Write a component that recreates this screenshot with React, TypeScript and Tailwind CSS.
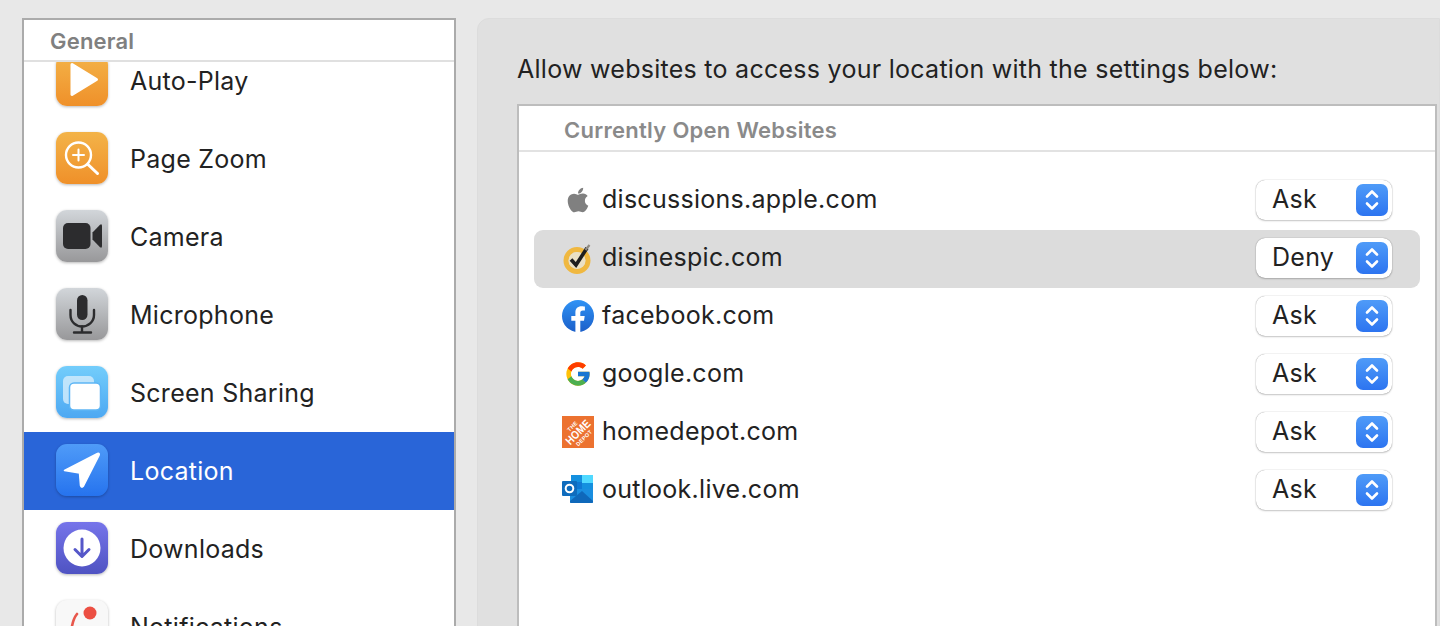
import React from "react";
import { FaApple } from "react-icons/fa";
import { FcGoogle } from "react-icons/fc";

const font = "font-['Inter','Liberation_Sans',sans-serif]";

const AppIcon = ({ className, children }: { className: string; children: React.ReactNode }) => (
  <div
    className={`mb-[2px] flex h-[52px] w-[52px] shrink-0 items-center justify-center rounded-[11px] shadow-[0_1px_3px_rgba(0,0,0,0.28)] ${className}`}
  >
    {children}
  </div>
);

const orange = "bg-linear-to-b from-[#f3b348] to-[#ef9029]";
const grey = "bg-linear-to-b from-[#d2d6da] to-[#98989a]";

const sideItems: { label: string; active?: boolean; icon: React.ReactNode }[] = [
  {
    label: "Auto-Play",
    icon: (
      <AppIcon className={orange}>
        <svg width="52" height="52" viewBox="0 0 52 52">
          <path d="M16 10.5 L40.5 25.5 L16 40.5 Z" fill="#fff" stroke="#fff" strokeWidth="3" strokeLinejoin="round" />
        </svg>
      </AppIcon>
    ),
  },
  {
    label: "Page Zoom",
    icon: (
      <AppIcon className={orange}>
        <svg width="52" height="52" viewBox="0 0 52 52" fill="none" stroke="#fff" strokeLinecap="round">
          <circle cx="22.5" cy="23" r="12.5" strokeWidth="2.4" />
          <path d="M32 32.5 L41.5 41.5" strokeWidth="3" />
          <path d="M17 23 H28 M22.5 17.5 V28.5" strokeWidth="2" />
        </svg>
      </AppIcon>
    ),
  },
  {
    label: "Camera",
    icon: (
      <AppIcon className={grey}>
        <svg width="52" height="52" viewBox="0 0 52 52" fill="#2c2c2e">
          <rect x="7" y="13" width="27.5" height="26" rx="5" />
          <path d="M36.5 22.5 L44 14.8 Q46 13.4 46 16 V36 Q46 38.6 44 37.2 L36.5 29.5 Z" />
        </svg>
      </AppIcon>
    ),
  },
  {
    label: "Microphone",
    icon: (
      <AppIcon className={grey}>
        <svg width="52" height="52" viewBox="0 0 52 52" fill="none" stroke="#2c2c2e">
          <rect x="21" y="7" width="10.5" height="25" rx="5.25" fill="#2c2c2e" stroke="none" />
          <path d="M14.5 22 V27 C14.5 34 20 38.5 26 38.5 C32 38.5 38 34 38 27 V22" strokeWidth="2.4" strokeLinecap="round" />
          <path d="M26 38.5 V44.5 M18 44.5 H35" strokeWidth="2.4" strokeLinecap="round" />
        </svg>
      </AppIcon>
    ),
  },
  {
    label: "Screen Sharing",
    icon: (
      <AppIcon className="bg-linear-to-b from-[#73cdfb] to-[#4da8f2]">
        <svg width="52" height="52" viewBox="0 0 52 52">
          <rect x="7" y="10" width="31" height="28" rx="5" fill="#cfeafc" opacity="0.85" />
          <rect x="13.5" y="17" width="31" height="27" rx="4.5" fill="#fff" stroke="#5db5f5" strokeWidth="1.5" />
        </svg>
      </AppIcon>
    ),
  },
  {
    label: "Location",
    active: true,
    icon: (
      <AppIcon className="bg-linear-to-b from-[#4f9bf8] to-[#2673ee]">
        <svg width="52" height="52" viewBox="0 0 52 52">
          <path d="M8.5 26.5 L41.5 9.5 Q44 8.8 43 11.5 L27.5 42 Q25.5 44.5 24.5 41.5 L23.5 29 Z" fill="#fff" stroke="#fff" strokeWidth="1.5" strokeLinejoin="round" />
        </svg>
      </AppIcon>
    ),
  },
  {
    label: "Downloads",
    icon: (
      <AppIcon className="bg-linear-to-b from-[#7674ea] to-[#4f53c2]">
        <svg width="52" height="52" viewBox="0 0 52 52" fill="none">
          <circle cx="26" cy="26" r="18.5" fill="#fff" />
          <path d="M26 17 V34 M19 27.5 L26 34.5 L33 27.5" stroke="#5557c9" strokeWidth="3" strokeLinecap="round" strokeLinejoin="round" />
        </svg>
      </AppIcon>
    ),
  },
  {
    label: "Notifications",
    icon: (
      <AppIcon className="bg-[#f8f8f8]">
        <svg width="52" height="52" viewBox="0 0 52 52" fill="none">
          <path d="M21 14 C16 20 16 26 15 33" stroke="#e8574c" strokeWidth="2.6" strokeLinecap="round" />
          <path d="M26 28 V36" stroke="#e8574c" strokeWidth="2.6" strokeLinecap="round" />
          <circle cx="34" cy="13" r="6.5" fill="#ec4f43" />
        </svg>
      </AppIcon>
    ),
  },
];

const Norton = () => (
  <svg width="32" height="32" viewBox="0 0 32 32" fill="none">
    <circle cx="15" cy="18.5" r="11" stroke="#f0b840" strokeWidth="5" />
    <circle cx="15" cy="18.5" r="8.5" fill="#f3e2b5" opacity="0.6" />
    <path d="M9 17.5 L14 23 L25 6" stroke="#1e1e1e" strokeWidth="3.6" strokeLinejoin="miter" />
    <path d="M23.5 8 L27.5 3" stroke="#8f8a80" strokeWidth="2.2" />
  </svg>
);

const Facebook = () => (
  <svg width="32" height="32" viewBox="0 0 32 32">
    <defs>
      <linearGradient id="fbg" x1="0" y1="0" x2="0" y2="1">
        <stop offset="0" stopColor="#2f93f5" />
        <stop offset="1" stopColor="#1b5fc9" />
      </linearGradient>
    </defs>
    <circle cx="16" cy="16" r="16" fill="url(#fbg)" />
    <path
      d="M13.4 32 V20.7 H9.3 V16 H13.4 V12.5 C13.4 8.4 15.8 6.2 19.5 6.2 C21.3 6.2 22.9 6.5 22.9 6.5 V10.5 H20.9 C18.9 10.5 18.3 11.7 18.3 13 V16 H22.7 L22 20.7 H18.3 V32 Z"
      fill="#fff"
    />
  </svg>
);

const HomeDepot = () => (
  <svg width="32" height="32" viewBox="0 0 32 32">
    <rect width="32" height="32" fill="#ec7230" />
    <g transform="rotate(-45 16 16)" fill="#fff" textAnchor="middle" fontFamily="'Liberation Sans', sans-serif" fontWeight="700">
      <text x="16" y="10" fontSize="5.5">THE</text>
      <text x="16" y="20" fontSize="11.5" textLength="30" lengthAdjust="spacingAndGlyphs">HOME</text>
      <text x="16" y="26.5" fontSize="5.5">DEPOT</text>
    </g>
  </svg>
);

const Outlook = () => (
  <svg width="32" height="32" viewBox="0 0 32 32">
    <rect x="9" y="1" width="22" height="15" fill="#1490df" />
    <rect x="20" y="1" width="11" height="8" fill="#50d9ff" />
    <rect x="9" y="8" width="11" height="9" fill="#0f78d4" />
    <path d="M8 15 L31 15 V28 Q31 29 30 29 H9 Q8 29 8 28 Z" fill="#1a8ee0" />
    <path d="M8 27 L20 17 L31 27 V28 Q31 29 30 29 H9 Q8 29 8 28 Z" fill="#0c5fb0" opacity="0.8" />
    <rect x="0" y="7" width="15" height="15" rx="1" fill="#0f6cbd" />
    <circle cx="7.5" cy="14.5" r="3.8" fill="none" stroke="#fff" strokeWidth="2" />
  </svg>
);

const sites: { name: string; value: string; selected?: boolean; icon: React.ReactNode }[] = [
  { name: "discussions.apple.com", value: "Ask", icon: <FaApple size={28} className="text-[#808080]" /> },
  { name: "disinespic.com", value: "Deny", selected: true, icon: <Norton /> },
  { name: "facebook.com", value: "Ask", icon: <Facebook /> },
  { name: "google.com", value: "Ask", icon: <FcGoogle size={28} /> },
  { name: "homedepot.com", value: "Ask", icon: <HomeDepot /> },
  { name: "outlook.live.com", value: "Ask", icon: <Outlook /> },
];

const SelectBox = ({ value }: { value: string }) => (
  <div className="mb-[2px] flex h-[40px] w-[136px] items-center justify-between rounded-[9px] bg-white pl-[16px] pr-[4px] shadow-[0_0_1px_rgba(0,0,0,0.45),0_1px_2px_rgba(0,0,0,0.2)]">
    <span className="pb-[2px] text-[#222]">{value}</span>
    <div className="flex h-[32px] w-[32px] items-center justify-center rounded-[7px] bg-linear-to-b from-[#4f9bf8] to-[#2d74f0]">
      <svg width="20" height="26" viewBox="0 0 20 26" fill="none" stroke="#fff" strokeWidth="2.6" strokeLinecap="round" strokeLinejoin="round">
        <path d="M5 9.5 L10 4.5 L15 9.5" />
        <path d="M5 16.5 L10 21.5 L15 16.5" />
      </svg>
    </div>
  </div>
);

export default function App() {
  return (
    <div className={`flex h-[626px] w-[1440px] items-start overflow-hidden bg-[#e8e8e8] pl-[22px] pt-[18px] text-[25px] leading-none tracking-[0.27px] text-[#222] ${font}`}>
      <aside className="flex h-[640px] w-[434px] shrink-0 flex-col border-2 border-[#ababab] bg-white">
        <div className="flex h-[42px] shrink-0 items-center border-b-2 border-[#e0e0e0] pl-[26px] pt-[1px] text-[22px] font-semibold tracking-[0.2px] text-[#808080]">
          General
        </div>
        <div className="min-h-0 flex-1 overflow-hidden">
          <div className="mt-[-20px]">
            {sideItems.map((item) => (
              <div
                key={item.label}
                className={`flex h-[78px] items-center gap-[22px] pl-[32px] ${item.active ? "bg-[#2965d8] text-white" : ""}`}
              >
                {item.icon}
                <span>{item.label}</span>
              </div>
            ))}
          </div>
        </div>
      </aside>

      <main className="ml-[21px] h-[640px] flex-1 rounded-tl-[12px] border border-[#dcdcdc] bg-[#e0e0e0] pl-[39px] pt-[34px]">
        <p className="h-[51px] pt-[4px]">Allow websites to access your location with the settings below:</p>
        <div className="h-[560px] w-[920px] border-2 border-[#bdbdbd] bg-white">
          <div className="flex h-[46px] items-center border-b-2 border-[#e2e2e2] pl-[45px] pt-[3px] text-[22px] font-semibold tracking-[0.28px] text-[#8a8a8a]">
            Currently Open Websites
          </div>
          <div className="px-[15px] pt-[20px]">
            {sites.map((site) => (
              <div
                key={site.name}
                className={`flex h-[58px] items-center justify-between rounded-[9px] px-[28px] ${site.selected ? "bg-[#dcdcdc]" : ""}`}
              >
                <div className="flex items-center gap-[8px] pb-[2px]">
                  <div className="flex h-[32px] w-[32px] items-center justify-center">{site.icon}</div>
                  <span className="pb-[2px]">{site.name}</span>
                </div>
                <SelectBox value={site.value} />
              </div>
            ))}
          </div>
        </div>
      </main>
    </div>
  );
}
